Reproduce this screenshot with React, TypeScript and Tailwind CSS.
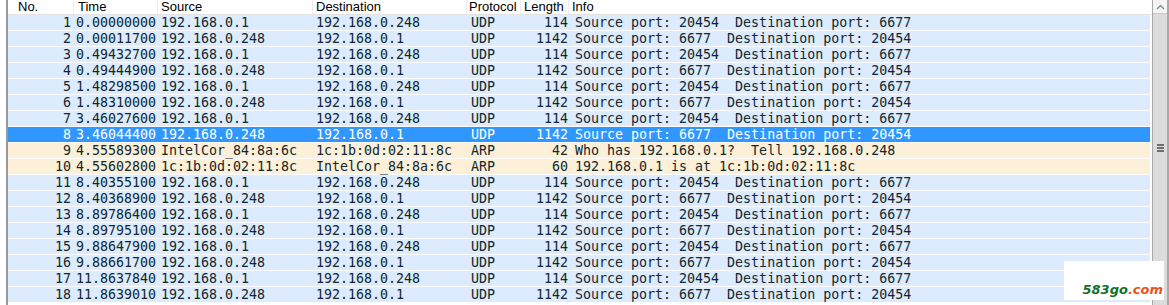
import React from "react";

type Row = [string, string, string, string, string, string, string];

const A = "192.168.0.1";
const B = "192.168.0.248";
const I1 = "Source port: 20454  Destination port: 6677";
const I2 = "Source port: 6677  Destination port: 20454";

const rows: Row[] = [
  ["1", "0.00000000", A, B, "UDP", "114", I1],
  ["2", "0.00011700", B, A, "UDP", "1142", I2],
  ["3", "0.49432700", A, B, "UDP", "114", I1],
  ["4", "0.49444900", B, A, "UDP", "1142", I2],
  ["5", "1.48298500", A, B, "UDP", "114", I1],
  ["6", "1.48310000", B, A, "UDP", "1142", I2],
  ["7", "3.46027600", A, B, "UDP", "114", I1],
  ["8", "3.46044400", B, A, "UDP", "1142", I2],
  ["9", "4.55589300", "IntelCor_84:8a:6c", "1c:1b:0d:02:11:8c", "ARP", "42", "Who has 192.168.0.1?  Tell 192.168.0.248"],
  ["10", "4.55602800", "1c:1b:0d:02:11:8c", "IntelCor_84:8a:6c", "ARP", "60", "192.168.0.1 is at 1c:1b:0d:02:11:8c"],
  ["11", "8.40355100", A, B, "UDP", "114", I1],
  ["12", "8.40368900", B, A, "UDP", "1142", I2],
  ["13", "8.89786400", A, B, "UDP", "114", I1],
  ["14", "8.89795100", B, A, "UDP", "1142", I2],
  ["15", "9.88647900", A, B, "UDP", "114", I1],
  ["16", "9.88661700", B, A, "UDP", "1142", I2],
  ["17", "11.8637840", A, B, "UDP", "114", I1],
  ["18", "11.8639010", B, A, "UDP", "1142", I2],
];

const cols = "grid grid-cols-[66px_84px_155px_154px_54px_48px_1fr]";

export default function App() {
  return (
    <div className="relative w-[1169px] h-[305px] overflow-hidden bg-white flex">
      <div className="w-[6px] bg-white" />
      <div className="w-[2px] bg-[#9a9a9a]" />
      <div className="flex-1 flex flex-col">
        <div
          className={`${cols} h-[15px] border-b border-[#e2e2e2] text-[13px] leading-[14px] text-black`}
          style={{ fontFamily: '"Liberation Sans", Arial, sans-serif' }}
        >
          <div className="pl-[10px] border-r border-[#ececec]">No.</div>
          <div className="pl-[4px] border-r border-[#ececec]">Time</div>
          <div className="pl-[3px] border-r border-[#ececec]">Source</div>
          <div className="pl-[3px] border-r border-[#ececec]">Destination</div>
          <div className="pl-[2px] border-r border-[#ececec]">Protocol</div>
          <div className="pl-[3px] border-r border-[#ececec]">Length</div>
          <div className="pl-[3px]">Info</div>
        </div>
        <div
          className="flex flex-col text-[13.3px] leading-[15px]"
          style={{ fontFamily: '"DejaVu Sans Mono", "Liberation Mono", monospace' }}
        >
          {rows.map((r, i) => {
            const sel = r[0] === "8";
            const arp = r[4] === "ARP";
            const bg = sel ? "bg-[#2f97ff] text-white" : arp ? "bg-[#fcf0d8] text-[#12272e]" : "bg-[#dcebfd] text-[#12272e]";
            return (
              <div key={i} className={`${cols} h-[16px] border-b border-white mr-[2px] ${bg} whitespace-pre`}>
                <div className="text-right pr-[3px]">{r[0]}</div>
                <div className="pl-[2px]">{r[1]}</div>
                <div className="pl-[3px]">{r[2]}</div>
                <div className="pl-[3px]">{r[3]}</div>
                <div className="pl-[4px]">{r[4]}</div>
                <div className="text-right pr-[1px]">{r[5]}</div>
                <div className="pl-[6px]">{r[6]}</div>
              </div>
            );
          })}
        </div>
      </div>
      <div className="w-[17px] flex flex-col border-l border-[#a8a8a8] bg-[#dcdcdc] border-r-2 border-r-[#a8a8a8]">
        <div className="h-[14px] bg-[#f4f4f4] border-b border-[#c8c8c8] flex items-center justify-center">
          <svg width="9" height="6" viewBox="0 0 9 6">
            <path d="M1 5 L4.5 1.5 L8 5" fill="none" stroke="#6a8a86" strokeWidth="1.2" />
          </svg>
        </div>
        <div className="flex flex-col items-center gap-[1px] mt-[130px]">
          <div className="w-[7px] h-[2px] bg-[#6e6e6e]" />
          <div className="w-[7px] h-[2px] bg-[#6e6e6e]" />
          <div className="w-[7px] h-[2px] bg-[#6e6e6e]" />
        </div>
      </div>
      <div className="absolute left-[1064px] top-[261px] w-[100px] h-[39px] bg-white flex items-end justify-end pb-[3px] pr-[1px]">
        <span
          className="italic font-semibold text-[13px] leading-[14px]"
          style={{ fontFamily: '"DejaVu Sans", Verdana, sans-serif' }}
        >
          <span className="text-[#13702a]">583go</span>
          <span className="text-[#e8531e]">.com</span>
        </span>
      </div>
    </div>
  );
}
